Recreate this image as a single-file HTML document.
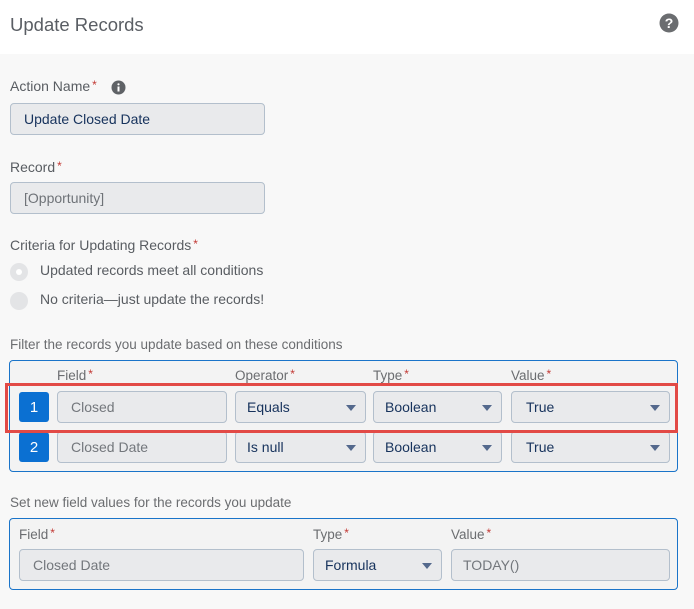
<!DOCTYPE html>
<html><head><meta charset="utf-8"><style>
*{box-sizing:border-box;margin:0;padding:0}
body{width:694px;height:609px;overflow:hidden;background:#f8f8f8;font-family:"Liberation Sans",sans-serif;color:#54595f;position:relative}
.a{position:absolute;white-space:nowrap}
.hdr{left:0;top:0;width:694px;height:54px;background:#fff}
.lbl{font-size:14px;color:#595d62}
.req{color:#c23934;font-size:12px;position:relative;top:-2px;margin-left:2px}
.in{position:absolute;background:#e9eaec;border:1px solid #b3bfcc;border-radius:4px;font-size:14px;padding-left:13px;display:flex;align-items:center;color:#73777c}
.dk{color:#16325c}
.sel::after{content:"";position:absolute;right:9px;top:13px;border-left:5px solid transparent;border-right:5px solid transparent;border-top:6px solid #54698d}
.box{border:1px solid #1a74c9;border-radius:4px;background:#f3f3f3}
.badge{position:absolute;width:30px;height:30px;background:#0b70d2;border-radius:3px;color:#fff;font-size:15px;display:flex;align-items:center;justify-content:center}
.sm{font-size:13.5px;color:#6b6d70}
.radio{position:absolute;width:18px;height:18px;border-radius:50%;background:#e3e4e6}
</style></head><body>
<div class="a hdr"></div>
<div class="a" style="left:10px;top:14px;font-size:18.5px;color:#5a5e64">Update Records</div>
<svg class="a" style="left:659px;top:13px" width="20" height="20" viewBox="0 0 20 20"><circle cx="10" cy="10" r="9.5" fill="#6b6d70"/><text x="10" y="15" font-size="14" font-weight="bold" fill="#fff" text-anchor="middle" font-family="Liberation Sans">?</text></svg>

<div class="a lbl" style="left:10px;top:78px">Action Name<span class="req">*</span></div>
<svg class="a" style="left:111px;top:80px" width="15" height="15" viewBox="0 0 15 15"><circle cx="7.5" cy="7.5" r="7" fill="#5f6266"/><rect x="6.5" y="6.5" width="2" height="5" fill="#fff"/><circle cx="7.5" cy="4.3" r="1.1" fill="#fff"/></svg>
<div class="in dk" style="left:10px;top:103px;width:255px;height:32px">Update Closed Date</div>

<div class="a lbl" style="left:10px;top:159px">Record<span class="req">*</span></div>
<div class="in" style="left:10px;top:182px;width:255px;height:32px;color:#6f7378">[Opportunity]</div>

<div class="a lbl" style="left:10px;top:237px">Criteria for Updating Records<span class="req">*</span></div>
<div class="radio" style="left:10px;top:263px"></div><div class="a" style="left:16px;top:269px;width:6px;height:6px;border-radius:50%;background:#fff"></div>
<div class="a lbl" style="left:40px;top:262px">Updated records meet all conditions</div>
<div class="radio" style="left:10px;top:292px"></div>
<div class="a lbl" style="left:40px;top:291px">No criteria—just update the records!</div>

<div class="a sm" style="left:10px;top:337px">Filter the records you update based on these conditions</div>
<div class="a box" style="left:9px;top:360px;width:669px;height:112px"></div>
<div class="a sm" style="left:57px;top:368px">Field<span class="req">*</span></div>
<div class="a sm" style="left:235px;top:368px">Operator<span class="req">*</span></div>
<div class="a sm" style="left:373px;top:368px">Type<span class="req">*</span></div>
<div class="a sm" style="left:511px;top:368px">Value<span class="req">*</span></div>

<div class="badge" style="left:19px;top:392px">1</div>
<div class="in" style="left:57px;top:391px;width:170px;height:32px">Closed</div>
<div class="in dk sel" style="left:235px;top:391px;width:131px;height:32px;padding-left:11px">Equals</div>
<div class="in dk sel" style="left:373px;top:391px;width:129px;height:32px;padding-left:11px">Boolean</div>
<div class="in dk sel" style="left:511px;top:391px;width:159px;height:32px;padding-left:14px">True</div>

<div class="badge" style="left:19px;top:432px">2</div>
<div class="in" style="left:57px;top:431px;width:170px;height:32px">Closed Date</div>
<div class="in dk sel" style="left:235px;top:431px;width:131px;height:32px;padding-left:11px">Is null</div>
<div class="in dk sel" style="left:373px;top:431px;width:129px;height:32px;padding-left:11px">Boolean</div>
<div class="in dk sel" style="left:511px;top:431px;width:159px;height:32px;padding-left:14px">True</div>

<div class="a" style="left:5px;top:383px;width:673px;height:50px;border:3px solid #e24a46"></div>

<div class="a sm" style="left:10px;top:495px">Set new field values for the records you update</div>
<div class="a box" style="left:9px;top:518px;width:669px;height:72px"></div>
<div class="a sm" style="left:19px;top:527px">Field<span class="req">*</span></div>
<div class="a sm" style="left:313px;top:527px">Type<span class="req">*</span></div>
<div class="a sm" style="left:451px;top:527px">Value<span class="req">*</span></div>
<div class="in" style="left:19px;top:549px;width:285px;height:32px">Closed Date</div>
<div class="in dk sel" style="left:313px;top:549px;width:129px;height:32px;padding-left:11px">Formula</div>
<div class="in" style="left:451px;top:549px;width:219px;height:32px;padding-left:11px">TODAY()</div>
</body></html>
